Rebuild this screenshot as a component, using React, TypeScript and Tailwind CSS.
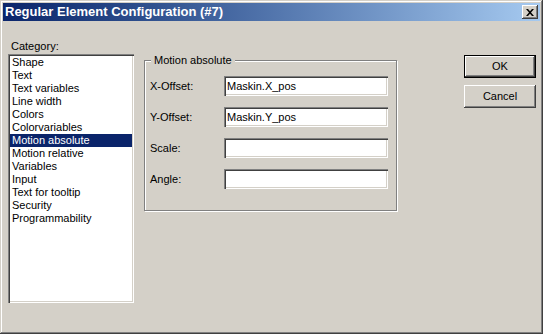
import React from 'react';

const categories = [
  'Shape',
  'Text',
  'Text variables',
  'Line width',
  'Colors',
  'Colorvariables',
  'Motion absolute',
  'Motion relative',
  'Variables',
  'Input',
  'Text for tooltip',
  'Security',
  'Programmability',
];

const fields = [
  { label: 'X-Offset:', value: 'Maskin.X_pos' },
  { label: 'Y-Offset:', value: 'Maskin.Y_pos' },
  { label: 'Scale:', value: '' },
  { label: 'Angle:', value: '' },
];

const sunken =
  'shadow-[inset_1px_1px_0_#808080,inset_2px_2px_0_#404040,inset_-1px_-1px_0_#ffffff,inset_-2px_-2px_0_#d4d0c8]';
const raised =
  'shadow-[inset_-1px_-1px_0_#404040,inset_1px_1px_0_#ffffff,inset_-2px_-2px_0_#808080,inset_2px_2px_0_#d4d0c8]';

export default function App() {
  return (
    <div className="w-[543px] h-[334px] bg-[#d4d0c8] p-[3px] flex flex-col font-['Liberation_Sans',Arial,sans-serif] text-[11px] leading-[13px] text-black shadow-[inset_-1px_-1px_0_#404040,inset_1px_1px_0_#d4d0c8,inset_-2px_-2px_0_#808080,inset_2px_2px_0_#ffffff]">
      {/* title bar */}
      <div className="h-[18px] flex items-center justify-between pl-[2px] pr-[2px] bg-gradient-to-r from-[#0a246a] to-[#a6caf0]">
        <span className="text-white font-bold text-[13px] leading-[16px]">Regular Element Configuration (#7)</span>
        <div className={`w-[16px] h-[14px] bg-[#d4d0c8] flex items-center justify-center ${raised}`}>
          <svg width="8" height="7" viewBox="0 0 8 7">
            <path d="M0 0h2l2 2.3L6 0h2L5 3.5 8 7H6L4 4.7 2 7H0l3-3.5z" fill="#000" />
          </svg>
        </div>
      </div>

      {/* body */}
      <div className="flex pl-[5px] pt-[19px]">
        <div className="w-[126px] flex flex-col">
          <div className="h-[14px] pl-[3px]">Category:</div>
          <div className={`h-[249px] bg-white p-[2px] ${sunken}`}>
            {categories.map((c) => (
              <div
                key={c}
                className={
                  c === 'Motion absolute'
                    ? 'h-[13px] pl-[2px] bg-[#0a246a] text-white'
                    : 'h-[13px] pl-[2px]'
                }
              >
                {c}
              </div>
            ))}
          </div>
        </div>

        <div className="relative ml-[10px] mt-[20px] w-[253px] h-[151px] border border-[#808080] shadow-[inset_1px_1px_0_#ffffff,1px_1px_0_#ffffff]">
          <span className="absolute left-[6px] top-[-7px] px-[3px] bg-[#d4d0c8]">Motion absolute</span>
          <div className="flex flex-col gap-[11px] pt-[15px] pl-[5px]">
            {fields.map((f) => (
              <div key={f.label} className="flex items-center">
                <div className="w-[74px]">{f.label}</div>
                <div className={`w-[164px] h-[20px] bg-white flex items-center pl-[3px] ${sunken}`}>
                  {f.value}
                </div>
              </div>
            ))}
          </div>
        </div>

        <div className="ml-[67px] mt-[15px] w-[72px] flex flex-col gap-[7px]">
          <div className="h-[23px] border border-black">
            <div className={`h-full bg-[#d4d0c8] flex items-center justify-center ${raised}`}>OK</div>
          </div>
          <div className={`h-[23px] bg-[#d4d0c8] flex items-center justify-center ${raised}`}>Cancel</div>
        </div>
      </div>
    </div>
  );
}
